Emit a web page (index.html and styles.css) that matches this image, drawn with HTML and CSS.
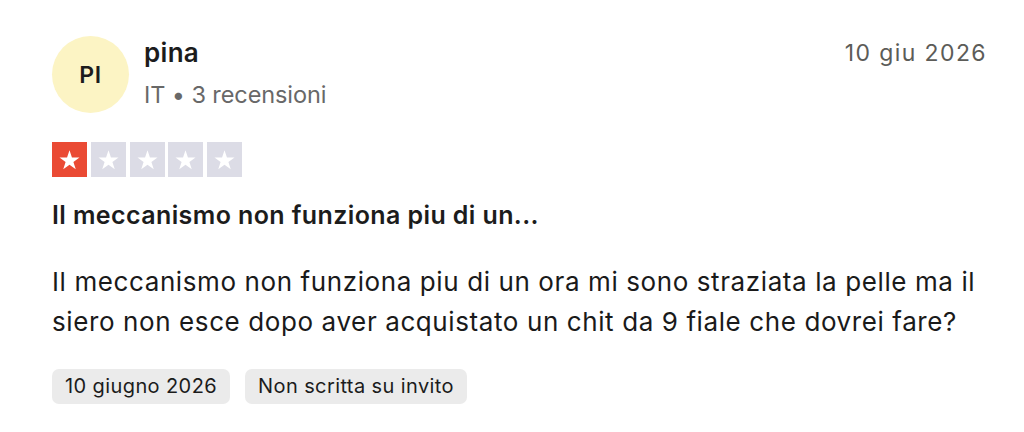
FILE: index.html
```html
<!DOCTYPE html>
<html lang="it">
<head>
<meta charset="utf-8">
<link rel="stylesheet" href="styles.css">
</head>
<body>
<article class="review">
  <header class="head">
    <div class="avatar">PI</div>
    <div class="who">
      <div class="name">pina</div>
      <div class="meta">IT • 3 recensioni</div>
    </div>
    <time class="date">10 giu 2026</time>
  </header>
  <div class="stars">
    <span class="star on"><svg viewBox="0 0 24 24"><path d="M12 3.2l2.35 6.9h7.25l-5.85 4.25 2.25 6.95L12 17l-6 4.3 2.25-6.95L2.4 10.1h7.25z"/></svg></span>
    <span class="star"><svg viewBox="0 0 24 24"><path d="M12 3.2l2.35 6.9h7.25l-5.85 4.25 2.25 6.95L12 17l-6 4.3 2.25-6.95L2.4 10.1h7.25z"/></svg></span>
    <span class="star"><svg viewBox="0 0 24 24"><path d="M12 3.2l2.35 6.9h7.25l-5.85 4.25 2.25 6.95L12 17l-6 4.3 2.25-6.95L2.4 10.1h7.25z"/></svg></span>
    <span class="star"><svg viewBox="0 0 24 24"><path d="M12 3.2l2.35 6.9h7.25l-5.85 4.25 2.25 6.95L12 17l-6 4.3 2.25-6.95L2.4 10.1h7.25z"/></svg></span>
    <span class="star"><svg viewBox="0 0 24 24"><path d="M12 3.2l2.35 6.9h7.25l-5.85 4.25 2.25 6.95L12 17l-6 4.3 2.25-6.95L2.4 10.1h7.25z"/></svg></span>
  </div>
  <h2 class="title">Il meccanismo non funziona piu di un...</h2>
  <p class="body">Il meccanismo non funziona piu di un ora mi sono straziata la pelle ma il siero non esce dopo aver acquistato un chit da 9 fiale che dovrei fare?</p>
  <div class="tags">
    <span class="tag">10 giugno 2026</span>
    <span class="tag">Non scritta su invito</span>
  </div>
</article>
</body>
</html>
```
FILE: styles.css
```css
html, body { margin: 0; padding: 0; background: #fff; }
body { font-family: Inter, "Liberation Sans", sans-serif; color: #1c1c1c; }
.review { padding: 36px 37px 0 52px; }
.head { display: flex; align-items: flex-start; }
.avatar {
  flex: none;
  width: 77px; height: 77px; border-radius: 50%;
  background: #fcf4c4; color: #1c1c1c;
  display: flex; align-items: center; justify-content: center;
  font-size: 23px; font-weight: 600; letter-spacing: 0.6px;
}
.who { margin-left: 15px; padding-top: 2px; }
.name { font-size: 26px; font-weight: 600; line-height: 30px; letter-spacing: 0.3px; }
.meta { font-size: 23.5px; color: #686868; line-height: 30px; margin-top: 11.5px; letter-spacing: -0.1px; }
.date { margin-left: auto; font-size: 23px; color: #5c5c58; line-height: 30px; padding-top: 2px; letter-spacing: 1.4px; }
.stars { display: flex; gap: 3.75px; margin-top: 29px; }
.star { width: 35px; height: 35px; background: #dcdce6; display: flex; align-items: center; justify-content: center; }
.star.on { background: #ea4a34; }
.star svg { width: 25px; height: 25px; fill: #fff; }
.title { font-size: 25px; font-weight: 600; margin: 22px 0 0; line-height: 32px; letter-spacing: 0.4px; }
.body { font-size: 26px; line-height: 40px; margin: 30.5px 0 0; letter-spacing: 0.6px; color: #1a1a1a; }
.tags { display: flex; gap: 15px; margin-top: 27px; }
.tag { background: #ebebeb; border-radius: 7px; padding: 0 13px; font-size: 20px; line-height: 35px; color: #1c1c1c; letter-spacing: 0.4px; }
```
